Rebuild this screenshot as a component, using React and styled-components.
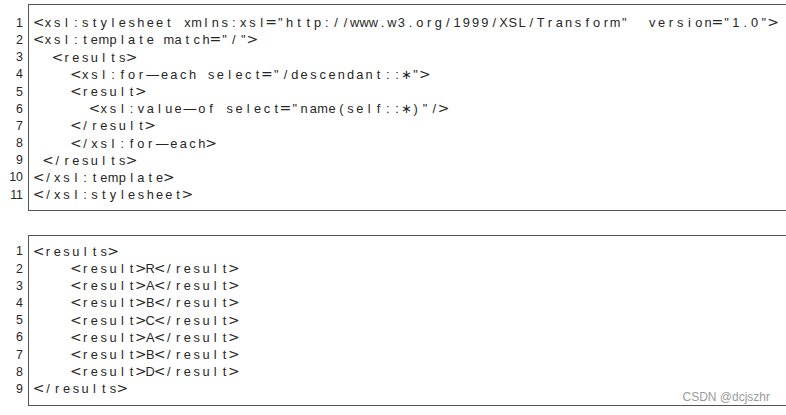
import React from "react";
import styled, { createGlobalStyle } from "styled-components";

const Global = createGlobalStyle`
  html, body { margin: 0; padding: 0; background: #ffffff; overflow: hidden; }
  body { font-family: "Liberation Sans", Arial, sans-serif; }
`;

const ROW = 17.2;
const COL = 9.3;

const Page = styled.div`
  position: relative;
  width: 786px;
  height: 415px;
  padding-top: 4px;
  box-sizing: border-box;
  display: flex;
  flex-direction: column;
  gap: 24px;
`;

const Listing = styled.div`
  display: flex;
  align-items: stretch;
`;

const Gutter = styled.div`
  width: 28px;
  flex: none;
  box-sizing: border-box;
  padding-right: 5px;
  padding-top: ${(p) => p.$padTop + 1.6}px;
  display: flex;
  flex-direction: column;
  align-items: flex-end;
`;

const Num = styled.div`
  height: ${ROW}px;
  line-height: ${ROW}px;
  font-size: 12.4px;
  color: #262626;
  font-family: "Liberation Sans", Arial, sans-serif;
`;

const Frame = styled.div`
  flex: 1;
  border: 1.6px solid #4f5653;
  border-right: none;
  padding: ${(p) => p.$padTop}px 0 ${(p) => p.$padBottom}px 5px;
  display: flex;
  flex-direction: column;
`;

const CodeLine = styled.div`
  display: flex;
  height: ${ROW}px;
  line-height: ${ROW}px;
  font-size: 12.8px;
  color: #262626;
`;

const Cell = styled.span`
  flex: none;
  width: ${(p) => p.$w}px;
  display: flex;
  justify-content: center;
  white-space: pre;
  font-family: ${(p) =>
    p.$sym ? `"DejaVu Sans", sans-serif` : `"Liberation Sans", Arial, sans-serif`};
  font-size: ${(p) => (p.$sym ? "14px" : "inherit")};
`;

const Watermark = styled.div`
  position: absolute;
  right: 16px;
  top: 390px;
  font-family: "Liberation Sans", Arial, sans-serif;
  font-size: 12px;
  color: #9b9b9b;
`;

const SYM = new Set(["<", ">", "="]);

function Code({ text }) {
  const chars = Array.from(text);
  return (
    <CodeLine>
      {chars.map((c, i) => (
        <Cell key={i} $w={c === "—" ? COL * 1.55 : COL} $sym={SYM.has(c)}>
          {c}
        </Cell>
      ))}
    </CodeLine>
  );
}

function Block({ lines, padTop, padBottom }) {
  return (
    <Listing>
      <Gutter $padTop={padTop}>
        {lines.map((_, i) => (
          <Num key={i}>{i + 1}</Num>
        ))}
      </Gutter>
      <Frame $padTop={padTop} $padBottom={padBottom}>
        {lines.map((l, i) => (
          <Code key={i} text={l} />
        ))}
      </Frame>
    </Listing>
  );
}

const xslt = [
  '<xsl:stylesheet xmlns:xsl="http://www.w3.org/1999/XSL/Transform"  version="1.0">',
  '<xsl:template match="/">',
  "  <results>",
  '    <xsl:for—each select="/descendant::∗">',
  "    <result>",
  '      <xsl:value—of select="name(self::∗)"/>',
  "    </result>",
  "    </xsl:for—each>",
  " </results>",
  "</xsl:template>",
  "</xsl:stylesheet>",
];

const output = [
  "<results>",
  ...["R", "A", "B", "C", "A", "B", "D"].map((v) => `    <result>${v}</result>`),
  "</results>",
];

export default function App() {
  return (
    <Page>
      <Global />
      <Block lines={xslt} padTop={9.2} padBottom={6.4} />
      <Block lines={output} padTop={7.2} padBottom={7} />
      <Watermark>CSDN @dcjszhr</Watermark>
    </Page>
  );
}
